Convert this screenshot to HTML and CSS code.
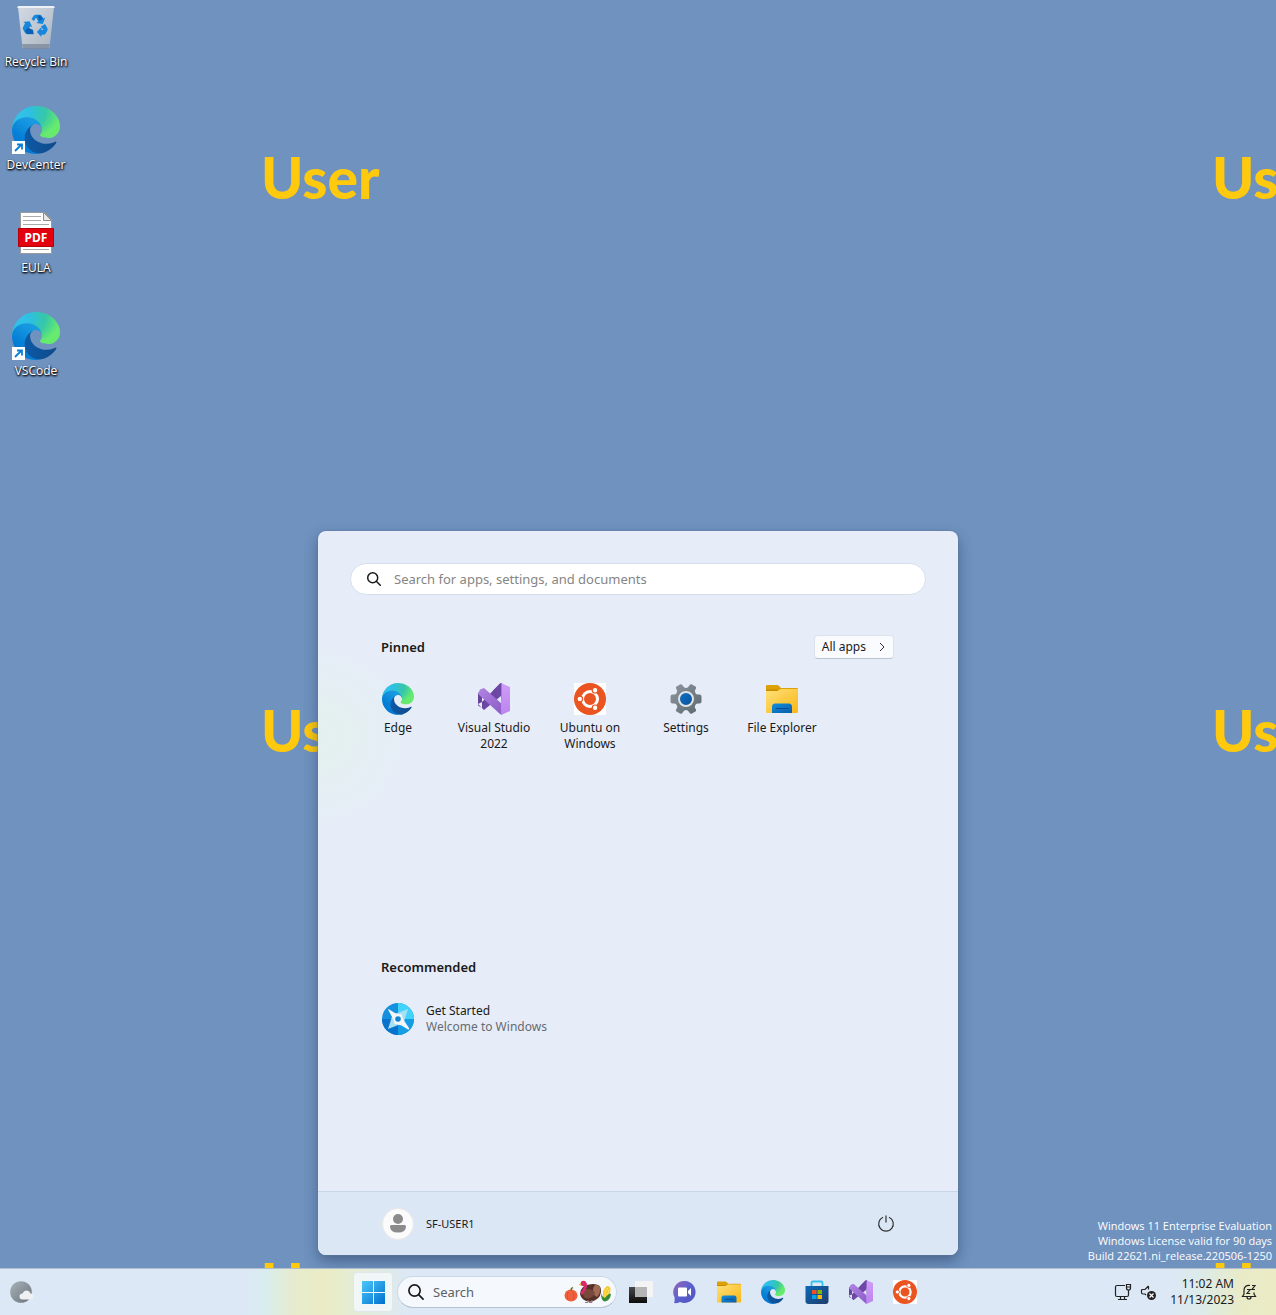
FILE: index.html
```html
<!DOCTYPE html>
<html lang="en">
<head>
<meta charset="utf-8">
<meta name="viewport" content="width=device-width, initial-scale=1">
<title>Desktop</title>
<link rel="stylesheet" href="styles.css">
</head>
<body>
<svg class="defs" aria-hidden="true">
  <defs>
    <linearGradient id="e1" x1="0.1" y1="0.5" x2="1" y2="0.5"><stop offset="0" stop-color="#0c59a4"/><stop offset="1" stop-color="#114a8b"/></linearGradient>
    <linearGradient id="e2" x1="0.8" y1="0.1" x2="0.3" y2="0.9"><stop offset="0" stop-color="#1b9de2"/><stop offset="0.3" stop-color="#1595df"/><stop offset="0.7" stop-color="#0680d7"/><stop offset="1" stop-color="#0078d4"/></linearGradient>
    <radialGradient id="e3" cx="0.1" cy="0.2" r="1"><stop offset="0" stop-color="#35c1f1"/><stop offset="0.3" stop-color="#2ec0de"/><stop offset="0.6" stop-color="#36c7a8"/><stop offset="0.9" stop-color="#66eb6e"/></radialGradient>
    <linearGradient id="fo" x1="0" y1="0" x2="1" y2="1"><stop offset="0" stop-color="#ffe07a"/><stop offset="1" stop-color="#f9b714"/></linearGradient>
    <linearGradient id="bl" x1="0" y1="0" x2="1" y2="1"><stop offset="0" stop-color="#1190dc"/><stop offset="1" stop-color="#0b5cab"/></linearGradient>
    <linearGradient id="gb" x1="0" y1="0" x2="1" y2="1"><stop offset="0" stop-color="#0d72c6"/><stop offset="1" stop-color="#0b4f9a"/></linearGradient>
    <linearGradient id="gr" x1="0" y1="0" x2="1" y2="1"><stop offset="0" stop-color="#8f999f"/><stop offset="1" stop-color="#5b666d"/></linearGradient>
    <linearGradient id="mo" x1="0" y1="0" x2="1" y2="1"><stop offset="0" stop-color="#a9b2b8"/><stop offset="1" stop-color="#6a747b"/></linearGradient>
    <linearGradient id="vd" x1="0" y1="0" x2="1" y2="1"><stop offset="0" stop-color="#5f3c8e"/><stop offset="1" stop-color="#7750b4"/></linearGradient>
    <linearGradient id="vl" x1="0" y1="0" x2="1" y2="1"><stop offset="0" stop-color="#b184e4"/><stop offset="1" stop-color="#8a5bc6"/></linearGradient>
    <linearGradient id="vr" x1="0" y1="0" x2="0" y2="1"><stop offset="0" stop-color="#d09cf8"/><stop offset="1" stop-color="#bb85ee"/></linearGradient>
    <linearGradient id="bin" x1="0" y1="0" x2="1" y2="1"><stop offset="0" stop-color="#d3d9e2"/><stop offset="0.5" stop-color="#c0c8d3"/><stop offset="1" stop-color="#aab4c0"/></linearGradient>
    <linearGradient id="ch" x1="0" y1="0" x2="1" y2="1"><stop offset="0" stop-color="#9a66b4"/><stop offset="0.5" stop-color="#5b60d0"/><stop offset="1" stop-color="#4f52bd"/></linearGradient>
    <linearGradient id="st" x1="0" y1="0" x2="1" y2="1"><stop offset="0" stop-color="#0c69b8"/><stop offset="1" stop-color="#213c69"/></linearGradient>
    <linearGradient id="wn" x1="0" y1="0" x2="1" y2="1"><stop offset="0" stop-color="#4cc8fa"/><stop offset="1" stop-color="#0070cf"/></linearGradient>
    <linearGradient id="bk" x1="0" y1="0" x2="0" y2="1"><stop offset="0" stop-color="#4a4a4a"/><stop offset="1" stop-color="#0c0c0c"/></linearGradient>
  </defs>
  <symbol id="i-edge" viewBox="0 0 256 256">
    <path fill="url(#e1)" d="M231 190.500c-3.400 1.800-6.900 3.400-10.500 4.700-11.500 4.300-23.600 6.500-35.900 6.500-47.300 0-88.500-32.500-88.500-74.300 0-11.400 6.400-21.900 16.600-27.300C69.900 101.900 59 146.500 59 172.500c0 74 68.100 81.400 82.800 81.400 7.900 0 19.800-2.300 27-4.600l1.300-.4c27.600-9.500 51-28.100 66.600-52.800 1.200-1.900.6-4.300-1.200-5.500-1.300-.9-3-.9-4.500-.1z"/>
    <path fill="url(#e2)" d="M105.700 241.300c-8.900-5.500-16.600-12.800-22.700-21.300-26.300-36-18.400-86.500 17.600-112.800 3.800-2.700 7.700-5.200 11.900-7.200 3.100-1.500 8.400-4.100 15.500-4 10.100.1 19.600 4.900 25.700 13 4 5.400 6.300 11.900 6.400 18.700 0-.2 24.500-79.600-80-79.600C36.200 48.100.1 89.700.1 126.300c-.2 19.300 4 38.500 12.100 56 27.600 58.800 94.800 87.600 156.400 67.100-21.100 6.600-44.100 3.700-62.900-8.100z"/>
    <path fill="url(#e3)" d="M152.300 148.900c-.8 1-3.300 2.500-3.300 5.700 0 2.600 1.700 5.100 4.700 7.200 14.400 10 41.500 8.700 41.600 8.700 10.700 0 21.100-2.900 30.300-8.300 18.800-11 30.400-31.100 30.400-52.900.3-22.400-8-37.300-11.300-43.900C223.500 23.900 177.700 0 128 0 58 0 1 56.200 0 126.200c.5-36.500 36.800-66 80-66 3.500 0 23.500.3 42 10.100 16.300 8.600 24.900 18.900 30.800 29.200 6.200 10.700 7.300 24.100 7.300 29.500s-2.700 13.300-7.800 19.900z"/>
  </symbol>
  <symbol id="i-edge-link" viewBox="0 0 48 48">
    <use href="#i-edge" width="48" height="48"/>
    <path fill="#fff" d="M0 35h13v13H0z"/>
    <path d="M3 45l6-6M5 38.500h5v5" fill="none" stroke="#0b7fd6" stroke-width="1.800"/>
  </symbol>
  <symbol id="i-vs" viewBox="0 0 32 32">
    <path fill="url(#vd)" d="M0 10l4-2v17l-4-2.500zM0 21l6 6 17-14L24 0l-2 .5L4 19z"/>
    <path fill="url(#vl)" d="M2 6.500L6 5l18 16v11l-2-1L0 11z"/>
    <path fill="url(#vr)" d="M23 0l9 4v24l-9 4z"/>
    <path fill="#6d47a5" d="M15 7.500L22 .5 23.500 0v18.500L23 11l-5 5z" opacity=".8"/>
  </symbol>
  <symbol id="i-ubuntu" viewBox="0 0 32 32">
    <path fill="#fff" d="M0 0h32v32H0z"/><circle cx="16" cy="16" r="16" fill="#e95420"/>
    <circle cx="16" cy="16" r="7.500" fill="none" stroke="#fff" stroke-width="3"/>
    <g fill="#fff" stroke="#e95420" stroke-width="1.200"><circle cx="5.800" cy="16" r="2.800"/><circle cx="21.100" cy="7.200" r="2.800"/><circle cx="21.100" cy="24.800" r="2.800"/></g>
  </symbol>
  <symbol id="i-gear" viewBox="0 0 32 32">
    <path fill="url(#gr)" d="M10 1.500Q12 .5 13 3q1 2 3 2t3-2q1-2.500 3-1.500l3 1.700q2 1 .5 3-1.500 2 0 4 1 1.800 3.500 1.300 2.500-.3 2.500 2v5q0 2.300-2.500 2-2.500-.5-3.500 1.300-1.500 2 0 4 1.500 2-.5 3l-3 1.700q-2 1-3-1.500-1-2-3-2t-3 2q-1 2.500-3 1.500l-3-1.700q-2-1-.5-3 1.500-2 0-4-1-1.800-3.500-1.300-2.500.3-2.500-2v-5q0-2.300 2.500-2 2.500.5 3.500-1.300 1.500-2 0-4-1.500-2 .5-3z"/>
    <circle cx="16" cy="16" r="7" fill="url(#gb)" stroke="#dfe3e6" stroke-width="2"/>
  </symbol>
  <symbol id="i-folder" viewBox="0 0 32 32">
    <path fill="#dda005" d="M0 3q0-1 1-1h10q1 0 2 1l2 2h16q1 0 1 1v8H0z"/>
    <path fill="url(#fo)" d="M0 8h11q1 0 2-1l2-1h17v22q0 2-1 2H1q-1 0-1-1z"/>
    <path fill="#c88b00" d="M0 6.500h12.500q-1 1.500-2 1.500H0z"/>
    <path fill="url(#bl)" d="M6 30v-6q0-3.500 3-3.500h14q3 0 3 3.500v6z"/>
    <path stroke="#084a91" stroke-width="1.200" d="M10 25.500h12"/>
  </symbol>
  <symbol id="i-search" viewBox="0 0 16 16">
    <circle cx="6.700" cy="6.700" r="5" fill="none" stroke="currentColor" stroke-width="1.500"/><path stroke="currentColor" stroke-width="1.500" stroke-linecap="round" d="M10.300 10.300l4 4"/>
  </symbol>
</svg>

<main class="desktop">
  <div class="wallpaper" aria-hidden="true">
    <span>User</span><span>User</span><span>User</span><span>User</span><span>User</span><span>User</span>
  </div>

  <nav class="shortcuts" aria-label="Desktop">
    <a class="shortcut" href="#bin">
      <svg viewBox="0 -1 48 48">
        <path fill="url(#bin)" d="M6 3h36l-4.500 41h-27z"/><path fill="#7e8b9b" d="M10.200 40h27.600l-.4 3q-.2 2-2 2H12.600q-1.800 0-2-2z" opacity=".8"/>
        <path fill="#edf1f6" d="M7 2h34q2 0 1.700 2H5.300Q5 2 7 2z"/>
        <g fill="#1587dd"><path d="M19.500 15l2-3q.8-1.300 2.500-1.300h3.500q1.500 0 2.300 1.400l1.500 2.500 2-1-2.500 6.500-6.500-1 2-1.500-2.300-4-2 3.300z"/><path d="M29 22.500l4-2.500 2.300 4q.8 1.400 0 2.700l-1.600 2.800q-.7 1.200-2.300 1.200h-2V33l-4.500-5 4.500-5v3h2z"/><path d="M21 25.800h-5l2.200-3.500 2 1-2.600-6-6.500.7 2 1.300-2 3.600q-.7 1.200 0 2.500l2 3.500q.8 1.300 2.300 1.300H22z"/></g>
        <path fill="#0c61b4" d="M13 27l3-3.500 5 2.500v4h-5.500zM28 11.500l3 3-3.500 2.500-2-5.500z"/>
      </svg><span>Recycle Bin</span></a>
    <a class="shortcut" href="#devcenter"><svg><use href="#i-edge-link"/></svg><span>DevCenter</span></a>
    <a class="shortcut" href="#eula">
      <svg viewBox="0 0 48 48">
        <path fill="#fff" stroke="#9a9a9a" d="M8.500 3.500h24l7 7v34h-31z"/><path fill="#e8e8e8" stroke="#8c8c8c" d="M31.500 3.500l8 8h-8z"/>
        <path stroke="#aaa" d="M11 7.500h18M11 11.500h18M11 15.500h26M11 40.500h26"/>
        <path fill="#e3000f" stroke="#b3000b" d="M6.500 19.500h35v18h-35z"/>
        <text class="pdf" x="24" y="33" text-anchor="middle">PDF</text>
      </svg><span>EULA</span></a>
    <a class="shortcut" href="#vscode"><svg><use href="#i-edge-link"/></svg><span>VSCode</span></a>
  </nav>

  <p class="watermark">Windows 11 Enterprise Evaluation<br>Windows License valid for 90 days<br>Build 22621.ni_release.220506-1250</p>

  <section class="start" aria-label="Start">
    <div class="start-body">
      <label class="find"><svg><use href="#i-search"/></svg><input type="text" placeholder="Search for apps, settings, and documents" aria-label="Search for apps, settings, and documents"></label>
      <div class="head"><h2>Pinned</h2>
        <button class="all" type="button">All apps <svg viewBox="0 0 8 10"><path d="M2 1l4 4-4 4" fill="none" stroke="#333"/></svg></button></div>
      <div class="pins">
        <button type="button"><svg><use href="#i-edge"/></svg>Edge</button>
        <button type="button"><svg><use href="#i-vs"/></svg>Visual Studio 2022</button>
        <button type="button"><svg><use href="#i-ubuntu"/></svg>Ubuntu on Windows</button>
        <button type="button"><svg><use href="#i-gear"/></svg>Settings</button>
        <button type="button"><svg><use href="#i-folder"/></svg>File Explorer</button>
      </div>
      <div class="head"><h2>Recommended</h2></div>
      <button class="rec" type="button">
        <svg viewBox="0 0 32 32"><circle cx="16" cy="16" r="16" fill="#1490df"/><path fill="#42d3fb" d="M16 0a16 16 0 0 1 16 16H16z"/><path fill="#0873ca" d="M0 16a16 16 0 0 0 16 16V16z"/><path fill="#149ce5" d="M16 16h16a16 16 0 0 1-16 16z"/>
          <path fill="#a7dff5" d="M26 6l-4.500 14L6 26l4.500-14z"/><path fill="#f3f5f7" d="M6 6.500Q7 6 8 7l5 3q3 1.500 6.500 1 1 4 3.500 8l4 6q.5 1.500-1 1.500l-6.500-4q-3.500-1.500-7-1.500-.5-4-3-8z"/><circle cx="16" cy="16" r="2.800" fill="#1184d4"/></svg>
        <span>Get Started<small>Welcome to Windows</small></span>
      </button>
    </div>
    <footer class="start-foot">
      <button class="user" type="button"><svg viewBox="0 0 32 32"><circle cx="16" cy="16" r="15.500" fill="#fbfbfb" stroke="#ebe8e4"/><circle cx="16" cy="11" r="5" fill="#8b8b8b"/><path fill="#8b8b8b" d="M9.500 17h13q1.500 0 1.500 1.500 0 6-8 6t-8-6Q8 17 9.500 17z"/></svg>SF-USER1</button>
      <button class="power" type="button" aria-label="Power"><svg viewBox="0 0 18 18"><path d="M6 2.200a7.300 7.300 0 1 0 6 0M9 .5v7" fill="none" stroke="#333" stroke-width="1.200"/></svg></button>
    </footer>
  </section>
</main>

<footer class="taskbar">
  <button class="weather" type="button" aria-label="Weather"><svg viewBox="0 0 24 24"><circle cx="11" cy="12" r="10.800" fill="url(#mo)"/><path fill="#eef0f1" d="M12.500 19.500a3 3 0 0 1 0-6q1.500-3.500 4.500-3 3 .5 3.500 3a3 3 0 0 1 0 6z"/></svg></button>
  <div class="apps">
    <button class="win" type="button" aria-label="Start"><svg viewBox="0 0 24 24"><path fill="url(#wn)" d="M1 1h11v11H1zM13 1h11v11H13zM1 13h11v11H1zM13 13h11v11H13z"/></svg></button>
    <label class="task-find"><svg class="glass"><use href="#i-search"/></svg><input type="text" placeholder="Search" aria-label="Search">
      <svg class="season" viewBox="0 0 48 24">
        <ellipse cx="7" cy="15.500" rx="6.500" ry="6" fill="#f0603c"/><path d="M4 12q-1.500 4 0 8M9 12q2 4 0 8" stroke="#e2512f" fill="none"/><path d="M7 10.500l.5-2L9 7.500" stroke="#6b6a30" stroke-width="1.500" fill="none"/>
        <path fill="#543229" d="M19 7q8-5 15-2 3 1 3 6t-4 8q-5 4-11 2-5-2-6-7 0-4 3-7z"/><path fill="#a06b52" d="M31 5q4-1 5 2 1 6-3 10-4-2-4-6t2-6z"/><path fill="#76493a" d="M20 10q7-3 11 3-3 7-10 5-4-4-1-8z"/>
        <path d="M19 2.500q3 1 2.500 4T18 13" fill="none" stroke="#d42c69" stroke-width="3" stroke-linecap="round"/><circle cx="19.500" cy="3.500" r="2.800" fill="#d42c69"/><path fill="#f3b344" d="M17 3l-2.500 2L17 5.500z"/><path d="M24 20v2.500h-3M28 20v2.500h-3" stroke="#a27884" fill="none"/>
        <path fill="#f6c92c" d="M39 18q-1-9 4-12 5 0 3 7-1 7-5 8z"/><path d="M41 17q0-7 3-9M43 17q1-5 2-7" stroke="#fce573" fill="none"/><path fill="#388b36" d="M37 13q1 4 4 5 4-5 6-4-1 7-6 7.500-4 0-4-8.500z"/>
      </svg></label>
    <button type="button" aria-label="Task view"><svg viewBox="0 0 24 24"><path fill="#f4f4f4" d="M6 1h18v16H6z"/><path fill="url(#bk)" d="M0 7h18v16H0z"/><path fill="#b5b5b5" d="M6 7h12v10H6z"/></svg></button>
    <button type="button" aria-label="Chat"><svg viewBox="0 0 24 24"><path fill="url(#ch)" d="M12 1a11 11 0 1 1-5 21q-2 1.500-6 1 1-2 .5-6A11 11 0 0 1 12 1z"/><rect x="5" y="7.500" width="9" height="9" rx="1" fill="#fff"/><path fill="#fff" d="M15 11l3-3v8l-3-3z"/></svg></button>
    <button type="button" aria-label="File Explorer"><svg><use href="#i-folder"/></svg></button>
    <button type="button" aria-label="Edge"><svg><use href="#i-edge"/></svg></button>
    <button type="button" aria-label="Store"><svg viewBox="0 0 24 24"><path d="M6.500 8V3q0-1.500 1.500-1.500h8q1.500 0 1.500 1.500v5" fill="none" stroke="#38c0ee" stroke-width="1.800"/><path fill="url(#st)" d="M.5 6h23v15q0 3-3 3h-17q-3 0-3-3z"/><path fill="#f25022" d="M7 10h4.500v4H7z"/><path fill="#7fba00" d="M12.500 10H17v4h-4.500z"/><path fill="#00a4ef" d="M7 15h4.500v4H7z"/><path fill="#ffb900" d="M12.500 15H17v4h-4.500z"/></svg></button>
    <button type="button" aria-label="Visual Studio"><svg><use href="#i-vs"/></svg></button>
    <button type="button" aria-label="Ubuntu"><svg><use href="#i-ubuntu"/></svg></button>
  </div>
  <div class="tray">
    <button class="status" type="button" aria-label="Network and volume">
      <svg viewBox="0 0 18 18"><path d="M11 2.500H3q-1.500 0-1.500 1.500v8q0 1.500 1.500 1.500h10q1.500 0 1.500-1.500V8M6.500 13.500V16M10.500 13.500V16M4 16.500h9M12.500 1.500h4v3.500q0 2-2 2t-2-2zM12.500 4h4M14.500 7v4" fill="none" stroke="#222" stroke-width="1.200"/></svg>
      <svg viewBox="0 0 18 18"><path d="M8.500 3L5 6.500H2.500Q1.500 6.500 1.500 7.500v2q0 1.500 1.500 1.500h2l1 1M8.500 3v3.500" fill="none" stroke="#222" stroke-width="1.200"/><circle cx="11.500" cy="12.500" r="4.500" fill="#222"/><path d="M9.500 10.500l4 4M13.500 10.500l-4 4" stroke="#fff" stroke-width="1.200"/></svg>
    </button>
    <button class="clock" type="button">11:02 AM<br>11/13/2023</button>
    <button class="bell" type="button" aria-label="Notifications"><svg viewBox="0 0 18 18"><path d="M10 2.500Q4 2 4 7.500V11l-1.500 2.500h13L14 11V9.500M7 14q0 2 2 2t2-2M7 6.500h3.200L7 10.500h3.200M12 2.500h3l-3 4h3" fill="none" stroke="#222" stroke-width="1.200"/></svg></button>
  </div>
</footer>
</body>
</html>
```
FILE: styles.css
```css
* { box-sizing: border-box; }
body {
  margin: 0;
  min-height: 100vh;
  display: flex;
  flex-direction: column;
  overflow: hidden;
  background: #6f92bf;
  color: #1a1a1a;
  font: 12px/16px "Noto Sans", "Open Sans", sans-serif;
}
button {
  margin: 0; padding: 0;
  border: 0;
  background: none;
  color: inherit;
  font: inherit;
}
svg { display: block; flex: none; }
input { min-width: 0; border: 0; padding: 0; background: none; outline: 0; font: inherit; }
.defs { position: absolute; width: 0; height: 0; }

.desktop {
  position: relative;
  flex: 1;
  display: flex;
  flex-direction: column;
  align-items: flex-start;
  min-height: 780px;
}
.wallpaper {
  position: absolute;
  inset: 0;
  overflow: hidden;
  display: grid;
  grid-template-columns: 951px 951px;
  grid-auto-rows: 553px;
  padding: 142px 0 0 261px;
  color: #ffc90e;
  font: 900 57px/70px Lato, sans-serif;
}
.shortcuts { position: relative; display: flex; flex-direction: column; gap: 35px; width: 72px; padding-top: 3px; }
.shortcut {
  display: flex;
  flex-direction: column;
  align-items: center;
  gap: 2px;
  height: 68px;
  color: #fff;
  font: 12px/18px "Open Sans", sans-serif;
  text-decoration: none;
  white-space: nowrap;
  text-shadow: 1px 1px 2px #000, 0 1px 2px #000;
}
.shortcut svg { width: 48px; height: 48px; }
.pdf { fill: #fff; font: bold 12px "Noto Sans", sans-serif; text-shadow: none; }
.watermark {
  position: relative;
  margin: auto 4px 5px auto;
  color: #fff;
  font: 11px/15px "Open Sans", sans-serif;
  text-align: right;
}

.start {
  position: absolute;
  left: 50%;
  bottom: 13px;
  width: 640px;
  height: 724px;
  transform: translateX(-50%);
  display: flex;
  flex-direction: column;
  overflow: hidden;
  border-radius: 8px;
  background: radial-gradient(circle at 0 205px, #e3f1ed, transparent 90px), #e6edf8;
  box-shadow: 0 0 0 1px #60789c66, 0 6px 14px #2336557d;
}
.start-body { flex: 1; display: flex; flex-direction: column; padding: 32px; }
.find {
  display: flex;
  align-items: center;
  gap: 12px;
  height: 32px;
  padding: 0 15px;
  border: 1px solid #d5dfec;
  border-radius: 16px;
  background: #fff;
  font-size: 14px;
}
.find svg { width: 16px; height: 16px; }
.find input { flex: 1; font-size: 13px; }
input::placeholder { color: #858585; opacity: 1; }
.head { display: flex; align-items: center; justify-content: space-between; height: 24px; margin-top: 40px; padding: 0 32px 0 31px; }
h2 { margin: 0; font-size: 13px; font-weight: 600; }
.all {
  display: flex;
  align-items: center;
  gap: 12px;
  height: 24px;
  padding: 0 7px;
  border: 1px solid #dce3ed;
  border-bottom-color: #bcc5d3;
  border-radius: 4px;
  background: #f9fbfe;
}
.all svg { width: 8px; height: 10px; }
.pins { display: grid; grid-template-columns: repeat(6, 96px); height: 256px; padding-top: 24px; align-items: start; }
.pins button { display: flex; flex-direction: column; align-items: center; gap: 5px; padding: 0 10px; }
.pins svg { width: 32px; height: 32px; }
.rec { display: flex; align-items: center; gap: 12px; margin: 24px 32px 0; text-align: left; }
.rec svg, .user svg { width: 32px; height: 32px; }
small { display: block; color: #666b72; font-size: 12px; }
.start-foot {
  display: flex;
  align-items: center;
  justify-content: space-between;
  height: 64px;
  padding: 0 63px 0 64px;
  border-top: 1px solid #c8d6e5;
  background: #dbe7f5;
}
.user { display: flex; align-items: center; gap: 12px; font-size: 11px; }
.power svg { width: 18px; height: 18px; }

.taskbar {
  position: relative;
  display: grid;
  grid-template-columns: 1fr auto 1fr;
  align-items: center;
  height: 47px;
  border-top: 1px solid #b0bdcc;
  background: linear-gradient(90deg, #dce8f6 244px, #d8edf0 264px, #e7ebcd 294px, #ebecc5 325px, #e1ecdc 365px, #dce8f6 410px, #dce8f6 1170px, #dcebea 1200px, #e9ebc8 1240px, #ebecc5);
}
.weather { justify-self: start; margin-left: 10px; }
.weather svg, .apps svg { width: 24px; height: 24px; }
.apps { display: flex; align-items: center; padding-left: 2px; }
.apps button { display: grid; place-items: center; width: 44px; height: 40px; }
.apps .win { width: 40px; margin: 0 2px; border: 1px solid #dfe7e8; border-radius: 4px; background: #f1f6f6; }
.task-find {
  display: flex;
  align-items: center;
  gap: 8px;
  width: 220px;
  height: 32px;
  margin: 0 2px;
  padding: 0 4px 0 9px;
  border: 1px solid #ccd7e6;
  border-bottom-color: #b5c1d2;
  border-radius: 16px;
  background: #f5f9fd;
}
.task-find input { flex: 1; font-size: 13px; }
.task-find input::placeholder { color: #5c6066; }
.task-find .glass { width: 18px; height: 18px; }
.task-find .season { width: 48px; }
.tray { display: flex; align-items: center; justify-content: flex-end; padding-right: 18px; }
.tray svg { width: 18px; height: 18px; }
.status { display: flex; gap: 8px; margin-right: 12px; }
.clock { font-size: 12px; text-align: right; }
.bell { margin-left: 6px; }
```
